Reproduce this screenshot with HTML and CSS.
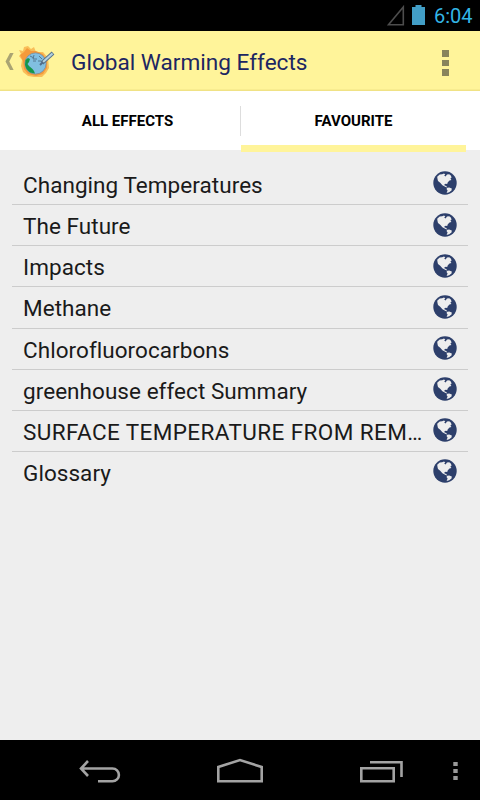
FILE: index.html
```
<!DOCTYPE html>
<html lang="en">
<head>
<meta charset="utf-8">
<title>Global Warming Effects</title>
<link rel="stylesheet" href="styles.css">
</head>
<body>
<svg class="defs" width="0" height="0" aria-hidden="true">
  <symbol id="globe" viewBox="0 0 24 24">
    <circle cx="12" cy="12" r="11.7" fill="#2d3f6b"/>
    <path fill="#eee" d="M4.2 5.8 6.7 3.6 9.2 3.3 11 2.6 12.3 3.4 11.2 4.6 12.6 5.4 14 3.4 16.2 3.2 17.8 4.5 18.6 6.5 17.4 7.6 18.4 9 16.5 9.6 14.8 11.2 14.2 13 12.8 12.8 11.4 13.2 11.6 14.6 13.4 15.1 14 16.5 12.6 16.1 9.4 14.2 7.2 11.8 5 10 4.5 8Z"/>
    <path fill="#eee" d="M14.2 16.8 16.2 16.5 18.8 17.6 18.5 19.6 16.2 21.2 13.6 22 14.6 19.4 13.5 18Z"/>
  </symbol>
</svg>
<div class="screen">
  <div class="status">
    <svg class="signal" width="18" height="21" viewBox="0 0 18 21"><path d="M1.5 19.8H16.3V2Z" fill="none" stroke="#4d4d4d" stroke-width="1.6"/></svg>
    <svg class="battery" width="13" height="20" viewBox="0 0 13 20"><path d="M0 2H3.5V0H9.5V2H13V20H0Z" fill="#429ec6"/></svg>
    <span class="clock">6:04</span>
  </div>
  <header class="bar">
    <svg class="up" width="9" height="20" viewBox="0 0 9 20"><path d="M5 1H8.6L4.3 9.5 8.6 18H5L.5 9.5Z" fill="#aaa473"/></svg>
    <svg class="logo" width="37" height="34" viewBox="0 0 37 34">
      <path d="M1 4 5 5 6 1 10 0 13 3 16 1 18 6 25 6 30 12 31 22 28 27 24 31 16 31 10 30 5 26 3 20 4 14 1 10 3 8Z" fill="#f9be59"/>
      <path d="M2 9 6 6 9 2 13 5 18 5 25 8 29 15 29 22 25 28 18 30 10 28 6 23 5 15Z" fill="#f49a3b"/>
      <circle cx="17.5" cy="17.5" r="10.6" fill="#81bfe1" stroke="#718aa0" stroke-width=".7"/>
      <path d="M7.5 14 10 12 12 13 11 16 9.5 18 11 20 14.5 23 16 25 17 27.5 12 26.5 8.5 23 7 19Z" fill="#15964b"/>
      <path d="M12 10 16 12M16 9 15 13 19 13M21 10 24 13M20 15 23 15M15 15 18 15" fill="none" stroke="#557991"/>
      <path d="M24 17 35 7" stroke="#58738a" stroke-width="4"/>
      <path d="M25 16 34.5 7.4" stroke="#b4d3e1" stroke-width="2"/>
      <path d="M22 19 25 16" stroke="#526c88" stroke-width="2"/>
    </svg>
    <h1 class="title">Global Warming Effects</h1>
    <div class="more"><i></i><i></i><i></i></div>
  </header>
  <nav class="tabs">
    <div class="tab"><span class="label">ALL EFFECTS</span></div>
    <div class="divider"></div>
    <div class="tab active"><span class="label">FAVOURITE</span></div>
  </nav>
  <ul class="list">
    <li><span>Changing Temperatures</span><svg><use href="#globe"/></svg></li>
    <li><span>The Future</span><svg><use href="#globe"/></svg></li>
    <li><span>Impacts</span><svg><use href="#globe"/></svg></li>
    <li><span>Methane</span><svg><use href="#globe"/></svg></li>
    <li><span>Chlorofluorocarbons</span><svg><use href="#globe"/></svg></li>
    <li><span>greenhouse effect Summary</span><svg><use href="#globe"/></svg></li>
    <li><span class="caps">SURFACE TEMPERATURE FROM REM…</span><svg><use href="#globe"/></svg></li>
    <li><span>Glossary</span><svg><use href="#globe"/></svg></li>
  </ul>
  <footer class="nav">
    <svg width="480" height="60" viewBox="0 5 480 60" fill="none" stroke="#a3a3a3" stroke-width="2.6">
      <path d="M81 33.5H112.5A6.4 6.4 0 0 1 112.5 46.3H98M88 26 81 33.5 88 41"/>
      <path d="M218.3 46.3V32L240 25 261.7 32V46.3Z"/>
      <path d="M361.3 33.3H393.7V46.3H361.3ZM370 27.3H401.5V42"/>
      <path d="M453.3 27H457.7V31H453.3ZM453.3 34H457.7V38H453.3ZM453.3 41H457.7V45H453.3Z" fill="#999" stroke="none"/>
    </svg>
  </footer>
</div>
</body>
</html>
```

FILE: styles.css
```
* { box-sizing: border-box; }
body { margin: 0; font-family: Roboto, sans-serif; }
.defs { position: absolute; }
.screen { width: 480px; height: 800px; display: flex; flex-direction: column; background: #eee; overflow: hidden; }
.status { height: 31px; background: #000; display: flex; align-items: flex-start; justify-content: flex-end; padding-right: 8px; }
.signal { margin: 5px 7px 0 0; }
.battery { margin: 5px 9px 0 0; }
.clock { width: 38px; font-size: 20px; line-height: 32px; color: #33b5e5; white-space: nowrap; }
.bar { height: 60px; background: #fff49a; border-bottom: 1px solid #f0e285; display: flex; align-items: flex-start; box-shadow: inset 0 -1px #f8ec90; }
.up { margin: 21px 0 0 5px; }
.logo { margin: 15px 0 0 4px; }
.title { margin: 0 0 0 16px; flex: 1; font-size: 22.6px; font-weight: 400; line-height: 63px; color: #1c2662; white-space: nowrap; }
.more { width: 7px; margin: 19px 31px 0 0; display: flex; flex-direction: column; gap: 3px; }
.more i { height: 6.5px; background: #89845b; }
.tabs { height: 61px; flex: none; display: flex; padding: 0 14px 0 15px; background: linear-gradient(#fff 59px, #eee 59px); }
.tab { width: 225px; display: flex; justify-content: center; }
.divider { width: 1px; height: 30px; margin-top: 15px; background: #ddd; }
.tab.active { border-bottom: 7px solid #fff49a; }
.label { font-size: 15px; font-weight: 700; line-height: 61px; color: #000; white-space: nowrap; }
.list { flex: 1; margin: 0; padding: 12px 12px 0; list-style: none; }
.list li { height: 41.17px; display: flex; align-items: flex-start; padding: 0 11px; border-bottom: 1px solid #ccc; }
.list li:last-child { border-color: transparent; }
.list span { flex: 1; min-width: 0; font-size: 22.5px; font-weight: 400; line-height: 42px; letter-spacing: .05px; color: #1a1a1a; white-space: nowrap; }
.list .caps { letter-spacing: .4px; }
.list svg { width: 24px; height: 24px; margin-top: 7.4px; flex: none; }
.nav { height: 60px; background: #000; }
.nav svg { display: block; }
```
